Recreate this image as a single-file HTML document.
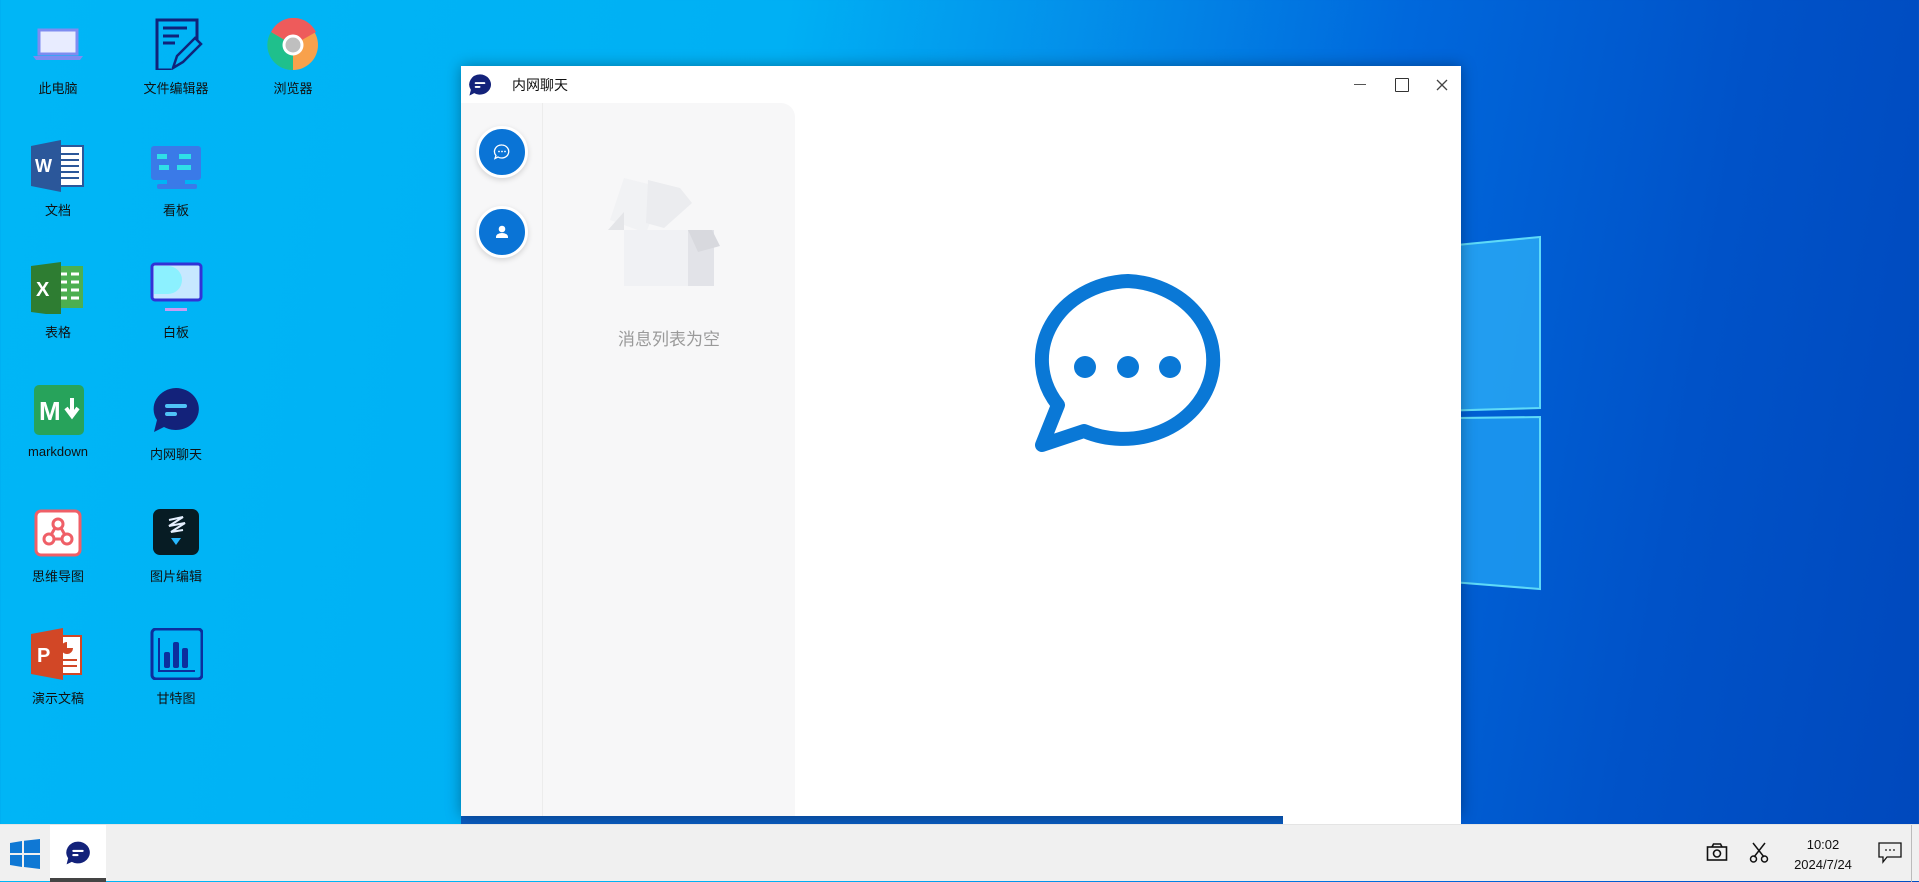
<!DOCTYPE html>
<html><head><meta charset="utf-8">
<style>
*{margin:0;padding:0;box-sizing:border-box}
body{width:1919px;height:881px;overflow:hidden;position:relative;font-family:"Liberation Sans","Noto Sans CJK SC",sans-serif;
background:linear-gradient(100deg,#00b6f6 0%,#00b0f4 38%,#0390ea 52%,#0068dc 68%,#0052c8 85%,#0048bc 100%);}
.ic{position:absolute;width:110px;text-align:center;font-size:13px;color:#111}
.ic svg{display:block;margin:0 auto 8px}
.win{position:absolute;left:461px;top:66px;width:1000px;height:758px;background:#fff;box-shadow:0 0 14px rgba(0,0,0,.35)}
.tb{position:absolute;left:0;top:824px;width:1919px;height:57px;background:#f0f0f0;border-top:1px solid #e4e4e4}
</style></head><body>
<svg style="position:absolute;left:1300px;top:200px" width="260" height="420">
<polygon points="0,60 240,37 240,208 0,215" fill="#28a8f5" opacity=".85" stroke="#6ff0ff" stroke-width="2"/>
<polygon points="0,220 240,217 240,389 0,370" fill="#1e9cf2" opacity=".85" stroke="#6ff0ff" stroke-width="2"/>
</svg>

<div class="ic" style="left:3px;top:18px">
<svg width="54" height="52" viewBox="0 0 54 52"><rect x="8" y="12" width="38" height="24" fill="#e8ecff" stroke="#7e8cf0" stroke-width="3"/><path d="M2 38h50l-3 4H5z" fill="#7e8cf0"/></svg>此电脑</div>
<div class="ic" style="left:121px;top:18px">
<svg width="54" height="52" viewBox="0 0 54 52"><path d="M22 52H8V2h40v20" fill="none" stroke="#10237a" stroke-width="3"/><path d="M14 10h24M14 18h16M14 25h12" stroke="#10237a" stroke-width="3"/><path d="M24 50l4-12 18-18 6 6-18 18z" fill="none" stroke="#10237a" stroke-width="2.5"/></svg>文件编辑器</div>
<div class="ic" style="left:238px;top:18px">
<svg width="54" height="52" viewBox="0 0 54 52"><circle cx="27" cy="27" r="25" fill="#f8a14c"/><path d="M27 27L5 14A25 25 0 0 1 50 14z" fill="#ee5b5b"/><path d="M27 27L5 14A25 25 0 0 0 27 52z" fill="#1fc08c"/><circle cx="27" cy="27" r="9" fill="#bfbfbf" stroke="#fff" stroke-width="3"/></svg>浏览器</div>

<div class="ic" style="left:3px;top:140px">
<svg width="54" height="52" viewBox="0 0 54 52"><rect x="24" y="6" width="28" height="40" fill="#fff" stroke="#2b579a" stroke-width="2"/><path d="M30 14h18M30 20h18M30 26h18M30 32h18M30 38h18" stroke="#2b579a" stroke-width="2"/><path d="M0 6l30-6v52L0 46z" fill="#2b579a"/><text x="4" y="32" font-size="18" font-weight="bold" fill="#fff" font-family="Liberation Sans">W</text></svg>文档</div>
<div class="ic" style="left:121px;top:140px">
<svg width="54" height="52" viewBox="0 0 54 52"><rect x="2" y="6" width="50" height="34" rx="3" fill="#3a7ae8"/><rect x="8" y="14" width="10" height="5" fill="#2ee0e8"/><rect x="30" y="14" width="12" height="5" fill="#2ee0e8"/><rect x="10" y="25" width="10" height="5" fill="#2ee0e8"/><rect x="28" y="25" width="14" height="5" fill="#2ee0e8"/><rect x="18" y="40" width="18" height="6" fill="#3a7ae8"/><rect x="8" y="44" width="40" height="5" rx="2" fill="#3a7ae8"/></svg>看板</div>

<div class="ic" style="left:3px;top:262px">
<svg width="54" height="52" viewBox="0 0 54 52"><rect x="22" y="4" width="30" height="42" fill="#4caf50"/><path d="M30 12h6M40 12h8M30 20h6M40 20h8M30 28h6M40 28h8M30 36h6M40 36h8" stroke="#fff" stroke-width="3"/><path d="M0 4l30-4v54L0 50z" fill="#2e7d32"/><text x="5" y="34" font-size="20" font-weight="bold" fill="#fff" font-family="Liberation Sans">X</text></svg>表格</div>
<div class="ic" style="left:121px;top:262px">
<svg width="54" height="52" viewBox="0 0 54 52"><rect x="3" y="2" width="49" height="36" rx="3" fill="#c7e8ff" stroke="#3232d6" stroke-width="3"/><path d="M5 4h14a14 14 0 0 1 0 28H5z" fill="#8cf1ff"/><rect x="16" y="46" width="22" height="3" fill="#c79cf4"/></svg>白板</div>

<div class="ic" style="left:3px;top:384px">
<svg width="54" height="52" viewBox="0 0 54 52"><rect x="3" y="1" width="50" height="50" rx="5" fill="#27a35b"/><text x="8" y="36" font-size="26" font-weight="bold" fill="#fff" font-family="Liberation Sans">M</text><path d="M41 14v16M35 24l6 8 6-8" stroke="#fff" stroke-width="4" fill="none"/></svg>markdown</div>
<div class="ic" style="left:121px;top:384px">
<svg width="54" height="52" viewBox="0 0 54 52"><path d="M27 4a23 21 0 1 1-12 39l-10 5 3-12A23 21 0 0 1 27 4z" fill="#13227a"/><rect x="16" y="20" width="22" height="4" rx="2" fill="#4fc3f7"/><rect x="16" y="28" width="12" height="4" rx="2" fill="#4fc3f7"/></svg>内网聊天</div>

<div class="ic" style="left:3px;top:506px">
<svg width="54" height="52" viewBox="0 0 54 52"><rect x="5" y="5" width="44" height="44" rx="5" fill="#fff" stroke="#ef5f67" stroke-width="3"/><circle cx="27" cy="18" r="5" fill="none" stroke="#ef5f67" stroke-width="3"/><circle cx="18" cy="33" r="5" fill="none" stroke="#ef5f67" stroke-width="3"/><circle cx="36" cy="33" r="5" fill="none" stroke="#ef5f67" stroke-width="3"/><path d="M24 22l-4 7M30 22l4 7M23 33h8" stroke="#ef5f67" stroke-width="3"/></svg>思维导图</div>
<div class="ic" style="left:121px;top:506px">
<svg width="54" height="52" viewBox="0 0 54 52"><rect x="4" y="3" width="46" height="46" rx="7" fill="#071c24"/><path d="M20 14l14-3-14 9 16-3-14 9 12-2" stroke="#e6f0ff" stroke-width="2" fill="none"/><path d="M22 32l5 7 5-7z" fill="#27b8ff"/></svg>图片编辑</div>

<div class="ic" style="left:3px;top:628px">
<svg width="54" height="52" viewBox="0 0 54 52"><rect x="24" y="8" width="26" height="38" fill="#fff" stroke="#d24726" stroke-width="2"/><path d="M36 14a6 6 0 1 0 6 6h-6z" fill="#d24726"/><path d="M30 32h16M30 38h16" stroke="#d24726" stroke-width="2"/><path d="M0 6l32-6v52L0 46z" fill="#d24726"/><text x="6" y="34" font-size="20" font-weight="bold" fill="#fff" font-family="Liberation Sans">P</text></svg>演示文稿</div>
<div class="ic" style="left:121px;top:628px">
<svg width="54" height="52" viewBox="0 0 54 52"><rect x="3" y="1" width="50" height="50" rx="4" fill="none" stroke="#0c2e9e" stroke-width="3"/><path d="M10 10v33h36" stroke="#0c2e9e" stroke-width="2" fill="none"/><rect x="15" y="24" width="6" height="16" rx="2" fill="#0c2e9e"/><rect x="24" y="14" width="6" height="26" rx="2" fill="#0c2e9e"/><rect x="33" y="20" width="6" height="20" rx="2" fill="#0c2e9e"/></svg>甘特图</div>

<div style="position:absolute;left:461px;top:816px;width:822px;height:8px;background:#0a5cc0"></div>

<div class="win" style="height:750px">
 <svg style="position:absolute;left:6px;top:6px" width="26" height="26" viewBox="0 0 54 52"><path d="M27 4a23 21 0 1 1-12 39l-10 5 3-12A23 21 0 0 1 27 4z" fill="#13227a"/><rect x="16" y="20" width="22" height="4" rx="2" fill="#fff"/><rect x="16" y="28" width="12" height="4" rx="2" fill="#fff"/></svg>
 <div style="position:absolute;left:51px;top:9px;font-size:14px;color:#111">内网聊天</div>
 <div style="position:absolute;left:893px;top:18px;width:12px;height:1px;background:#555"></div>
 <div style="position:absolute;left:934px;top:12px;width:14px;height:14px;border:1.5px solid #333;border-radius:1px"></div>
 <svg style="position:absolute;left:975px;top:13px" width="12" height="12"><path d="M1 1l10 10M11 1L1 11" stroke="#444" stroke-width="1.3"/></svg>
 <div style="position:absolute;left:0;top:37px;width:82px;height:713px;background:#f7f7f8;border-right:1px solid #ececec"></div>
 <div style="position:absolute;left:82px;top:37px;width:252px;height:713px;background:#f7f7f8;border-radius:0 14px 0 0"></div>
 <div style="position:absolute;left:15px;top:60px;width:52px;height:52px;border-radius:50%;background:#0a74d6;border:3px solid #fff;box-shadow:0 2px 6px rgba(0,0,0,.15)">
  <svg style="position:absolute;left:13px;top:13px" width="20" height="20" viewBox="0 0 20 20"><path d="M10 3a7 6.5 0 1 1-4 12l-3 1.5 1-3A7 6.5 0 0 1 10 3z" fill="none" stroke="#fff" stroke-width="1.3"/><circle cx="7" cy="9.5" r=".9" fill="#fff"/><circle cx="10" cy="9.5" r=".9" fill="#fff"/><circle cx="13" cy="9.5" r=".9" fill="#fff"/></svg></div>
 <div style="position:absolute;left:15px;top:140px;width:52px;height:52px;border-radius:50%;background:#0a74d6;border:3px solid #fff;box-shadow:0 2px 6px rgba(0,0,0,.15)">
  <svg style="position:absolute;left:13px;top:13px" width="20" height="20" viewBox="0 0 20 20"><circle cx="10" cy="7" r="3.3" fill="#fff"/><path d="M4 15a6 4 0 0 1 12 0v1H4z" fill="#fff"/></svg></div>
 <svg style="position:absolute;left:145px;top:100px" width="130" height="134" viewBox="0 0 130 130">
  <path d="M18 10l40 10 -18 45 -36-13z" fill="#f1f2f4"/>
  <path d="M42 12l32 8 12 15-28 25-18-5z" fill="#ebecef"/>
  <path d="M2 62l16-18v18z" fill="#e4e5e8"/>
  <path d="M18 62h64v56H18z" fill="#f0f1f4"/>
  <path d="M82 62h26v56H82z" fill="#e2e3e8"/>
  <path d="M82 62l10 22 22-6-8-16z" fill="#d8d9de"/>
 </svg>
 <div style="position:absolute;left:82px;top:259px;width:252px;text-align:center;font-size:17px;color:#9a9a9a">消息列表为空</div>
 <svg style="position:absolute;left:560px;top:200px" width="220" height="200" viewBox="0 0 220 200">
  <path d="M107 15a90 79 0 1 1-44 150l-42 14 16-40A90 79 0 0 1 107 15z" fill="none" stroke="#0a78d6" stroke-width="14" stroke-linejoin="round"/>
  <circle cx="64" cy="101" r="11" fill="#0a78d6"/><circle cx="107" cy="101" r="11" fill="#0a78d6"/><circle cx="149" cy="101" r="11" fill="#0a78d6"/>
 </svg>
</div>
<div style="position:absolute;left:1283px;top:816px;width:178px;height:8px;background:#fff"></div>

<div class="tb">
 <svg style="position:absolute;left:10px;top:14px" width="30" height="30" viewBox="0 0 30 30"><path d="M0 4l12-2v12H0zM14 1.7L30 0v14H14zM0 16h12v12L0 26zM14 16h16v14l-16-2z" fill="#0f78d4"/></svg>
 <div style="position:absolute;left:50px;top:0;width:56px;height:57px;background:#fff;border-bottom:4px solid #444"></div>
 <svg style="position:absolute;left:64px;top:14px" width="28" height="28" viewBox="0 0 54 52"><path d="M27 4a23 21 0 1 1-12 39l-10 5 3-12A23 21 0 0 1 27 4z" fill="#13227a"/><rect x="16" y="20" width="22" height="4" rx="2" fill="#fff"/><rect x="16" y="28" width="12" height="4" rx="2" fill="#fff"/></svg>
 <svg style="position:absolute;left:1706px;top:17px" width="22" height="20" viewBox="0 0 22 20"><rect x="1.5" y="5" width="19" height="13" fill="none" stroke="#111" stroke-width="1.6"/><path d="M6 5l1.5-3h7L16 5" fill="none" stroke="#111" stroke-width="1.6"/><circle cx="11" cy="11.5" r="3.5" fill="none" stroke="#111" stroke-width="1.6"/></svg>
 <svg style="position:absolute;left:1749px;top:17px" width="20" height="22" viewBox="0 0 20 22"><path d="M4 1l11 14M16 1L5 15" stroke="#111" stroke-width="1.5"/><circle cx="4.5" cy="17" r="3" fill="none" stroke="#111" stroke-width="1.5"/><circle cx="15.5" cy="17" r="3" fill="none" stroke="#111" stroke-width="1.5"/></svg>
 <div style="position:absolute;left:1791px;top:10px;width:64px;text-align:center;font-size:13px;line-height:20px;color:#111">10:02<br>2024/7/24</div>
 <svg style="position:absolute;left:1878px;top:17px" width="24" height="22" viewBox="0 0 24 22"><path d="M1 1h22v14H9l-4 5v-5H1z" fill="none" stroke="#111" stroke-width="1.3"/><circle cx="8" cy="8" r=".9" fill="#111"/><circle cx="12" cy="8" r=".9" fill="#111"/><circle cx="16" cy="8" r=".9" fill="#111"/></svg>
 <div style="position:absolute;left:1911px;top:0;width:1px;height:57px;background:#bbb"></div>
</div>
</body></html>
